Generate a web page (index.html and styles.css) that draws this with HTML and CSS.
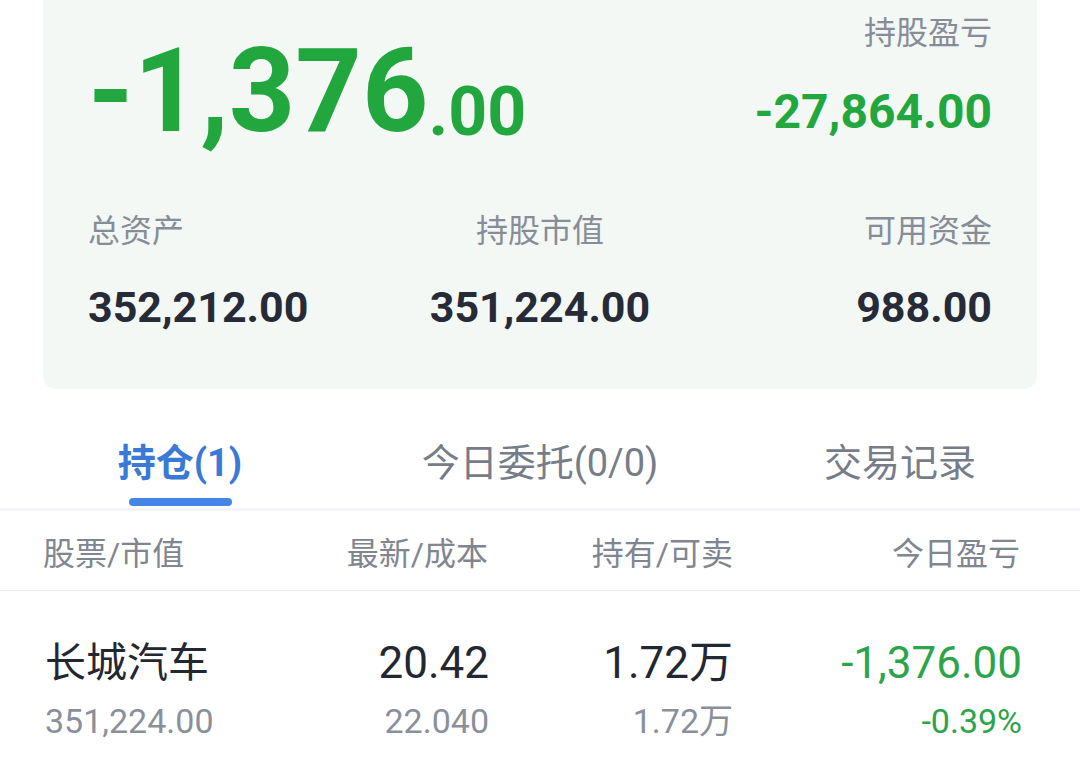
FILE: index.html
```html
<!DOCTYPE html>
<html lang="zh-CN">
<head>
<meta charset="utf-8">
<title>持仓</title>
<link rel="stylesheet" href="styles.css">
</head>
<body>
<div class="page">
  <section class="card">
    <div class="top">
      <div class="big"><span class="big-int">-1,376</span><span class="big-dec">.00</span></div>
      <div class="hold">
        <div class="label">持股盈亏</div>
        <div class="hold-value">-27,864.00</div>
      </div>
    </div>
    <div class="stats">
      <div class="stat stat-left">
        <div class="label">总资产</div>
        <div class="stat-value">352,212.00</div>
      </div>
      <div class="stat stat-center">
        <div class="label">持股市值</div>
        <div class="stat-value">351,224.00</div>
      </div>
      <div class="stat stat-right">
        <div class="label">可用资金</div>
        <div class="stat-value">988.00</div>
      </div>
    </div>
  </section>

  <nav class="tabs">
    <div class="tab tab-active"><span class="tab-text">持仓(1)</span><span class="tab-bar"></span></div>
    <div class="tab"><span class="tab-text">今日委托(0/0)</span><span class="tab-bar tab-bar-hidden"></span></div>
    <div class="tab"><span class="tab-text">交易记录</span><span class="tab-bar tab-bar-hidden"></span></div>
  </nav>

  <div class="grid head">
    <div class="c1">股票/市值</div>
    <div class="c2">最新/成本</div>
    <div class="c3">持有/可卖</div>
    <div class="c4">今日盈亏</div>
  </div>

  <div class="grid row">
    <div class="cell c1">
      <span class="l1 name">长城汽车</span>
      <span class="l2">351,224.00</span>
    </div>
    <div class="cell c2">
      <span class="l1">20.42</span>
      <span class="l2">22.040</span>
    </div>
    <div class="cell c3">
      <span class="l1">1.72万</span>
      <span class="l2">1.72万</span>
    </div>
    <div class="cell c4">
      <span class="l1 green">-1,376.00</span>
      <span class="l2 green">-0.39%</span>
    </div>
  </div>
</div>
</body>
</html>
```

FILE: styles.css
```css
* { box-sizing: border-box; }
html, body { margin: 0; padding: 0; background: #ffffff; }
body {
  font-family: "Roboto", "Noto Sans CJK SC", sans-serif;
  color: #232732;
  width: 1080px;
  height: 766px;
  overflow: hidden;
}
.page { width: 1080px; }

.card {
  margin: 0 43px;
  height: 389px;
  background: #f3f8f5;
  border-radius: 0 0 14px 14px;
  padding: 11px 45px 0;
  display: flex;
  flex-direction: column;
}
.top {
  display: flex;
  justify-content: space-between;
  align-items: flex-start;
}
.big {
  margin-top: 22px;
  color: #21a73e;
  font-weight: 700;
  line-height: 116px;
  white-space: nowrap;
}
.big-int { font-size: 116px; }
.big-dec { font-size: 68px; vertical-align: -4px; }

.hold { text-align: right; }
.label {
  font-size: 32px;
  line-height: 44px;
  color: #878d98;
}
.hold-value {
  margin-top: 33px;
  font-size: 48px;
  line-height: 48px;
  font-weight: 700;
  color: #21a73e;
}

.stats {
  margin-top: 25px;
  display: grid;
  grid-template-columns: 1fr 1fr 1fr;
}
.stat-left { text-align: left; }
.stat-center { text-align: center; }
.stat-right { text-align: right; }
.stat-value {
  margin-top: 32px;
  font-size: 43px;
  line-height: 44px;
  font-weight: 700;
  color: #262b37;
}

.tabs {
  display: flex;
  padding-top: 48px;
  border-bottom: 3px solid #f2f4f7;
}
.tab {
  flex: 1;
  display: flex;
  flex-direction: column;
  align-items: center;
}
.tab-text {
  font-size: 38px;
  line-height: 52px;
  color: #777d88;
  white-space: nowrap;
}
.tab-active .tab-text {
  color: #3a79d5;
  font-weight: 700;
}
.tab-bar {
  margin-top: 9px;
  margin-bottom: 2px;
  width: 103px;
  height: 8px;
  border-radius: 4px;
  background: #4585e6;
}
.tab-bar-hidden { visibility: hidden; }

.grid {
  display: grid;
  grid-template-columns: 250px 194px 244px 289px;
  padding: 0 58px 0 45px;
}
.c1 { text-align: left; }
.c2, .c3, .c4 { text-align: right; }

.head {
  height: 80px;
  align-items: center;
  border-bottom: 1px solid #e9ebee;
  font-size: 32px;
  color: #80868f;
  padding-left: 43px;
}
.head .c2 { margin-right: -1px; }
.head .c3 { margin-right: -2px; }

.row { padding-top: 44px; }
.cell {
  display: flex;
  flex-direction: column;
}
.c2.cell, .c3.cell, .c4.cell { align-items: flex-end; }
.l1 {
  font-size: 44px;
  line-height: 56px;
  color: #232732;
  white-space: nowrap;
}
.name { font-size: 41px; }
.l2 {
  font-size: 34px;
  line-height: 60px;
  color: #8a909b;
  white-space: nowrap;
}
.green { color: #2ca54a; }
```
